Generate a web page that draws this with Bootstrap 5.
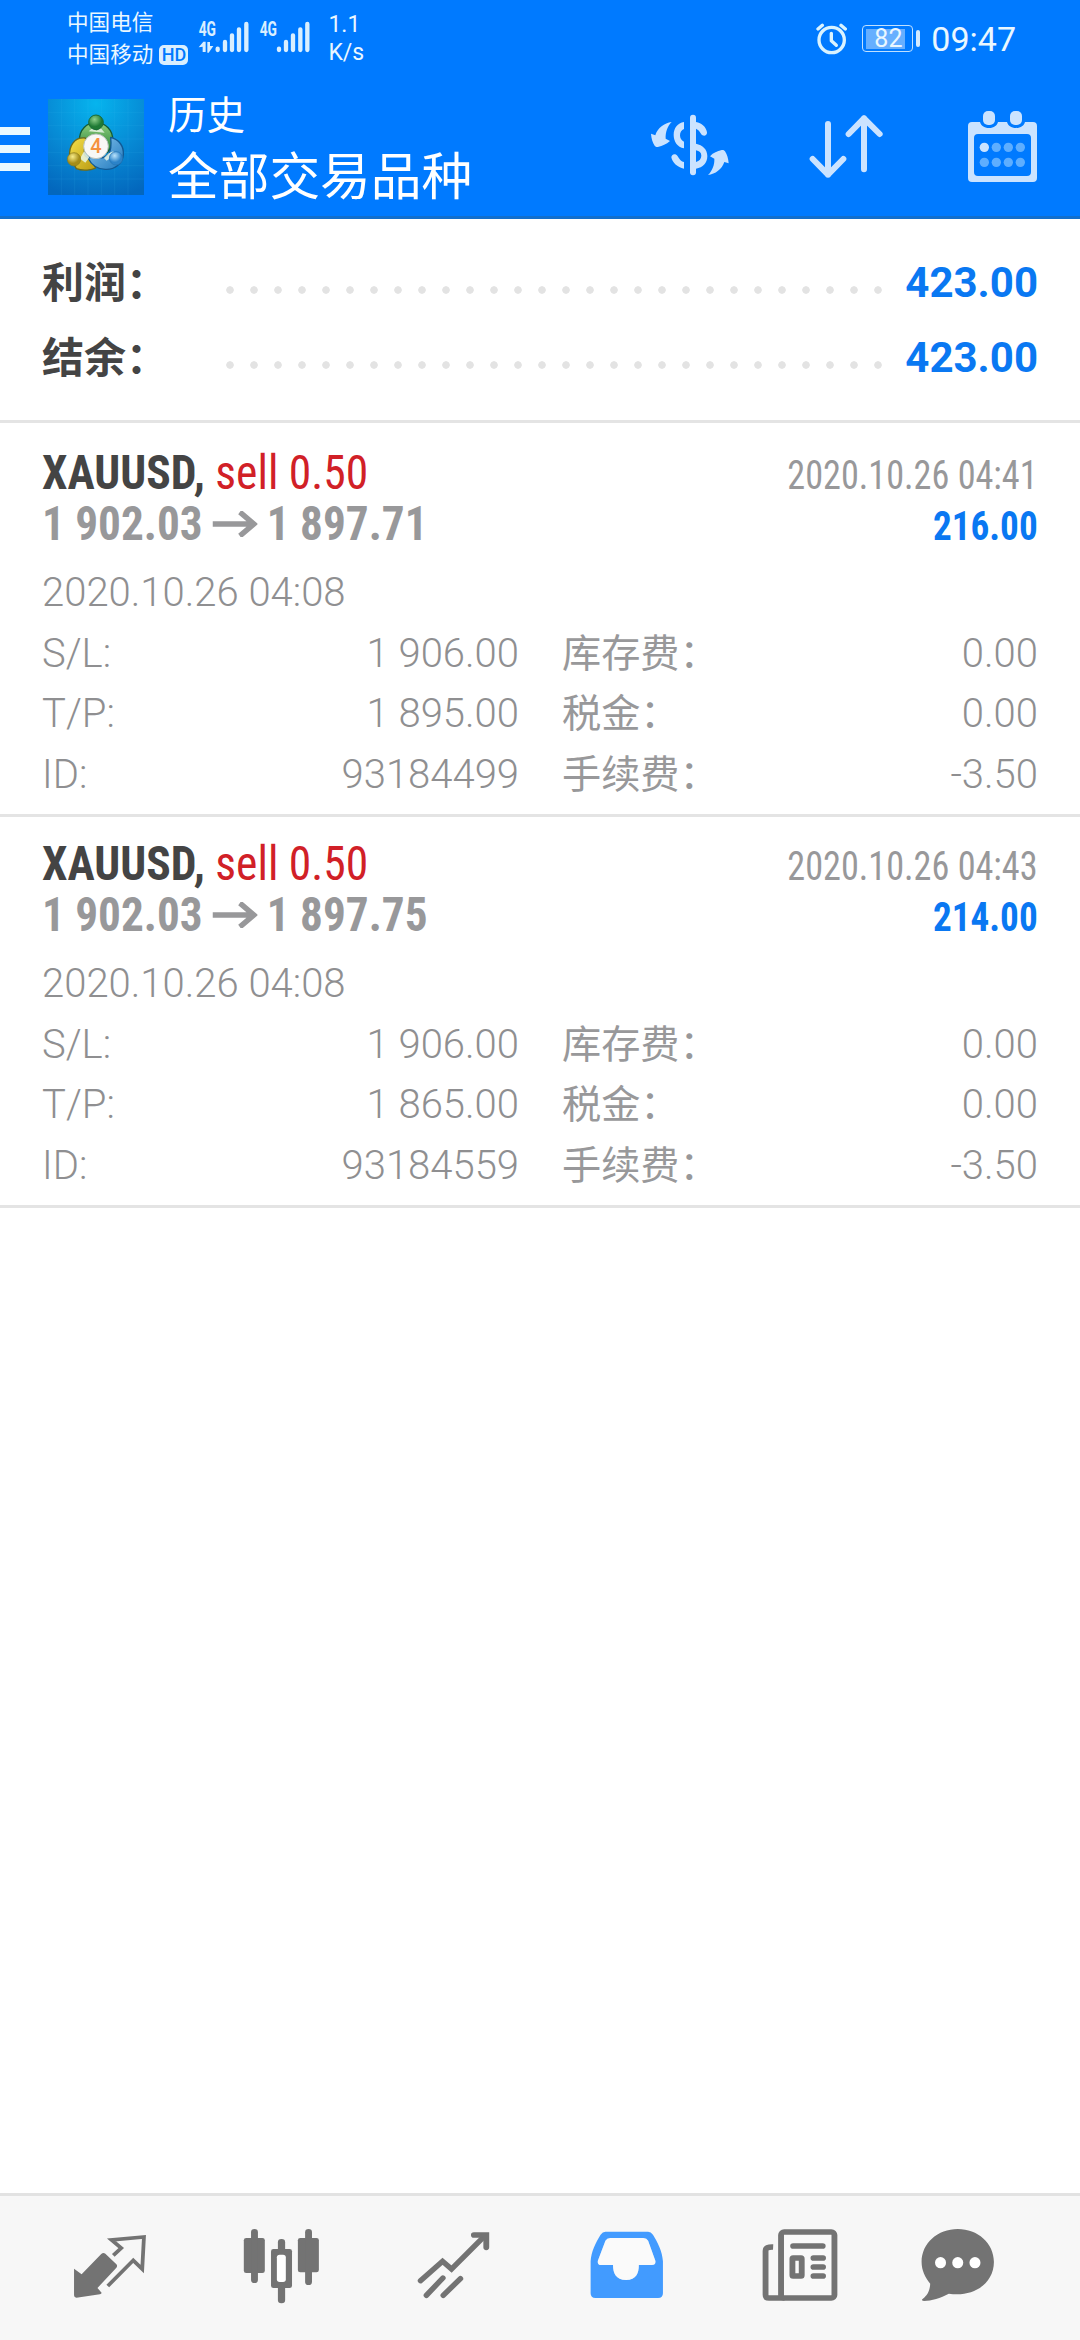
<!DOCTYPE html>
<html lang="zh-CN">
<head>
<meta charset="utf-8">
<meta name="viewport" content="width=device-width, initial-scale=1">
<title>历史</title>
<link rel="stylesheet" href="https://cdn.jsdelivr.net/npm/bootstrap@5.3.0/dist/css/bootstrap.min.css">
<style>
body{width:1080px;height:2340px;overflow:hidden;background:#fff;font-family:Roboto,"Noto Sans CJK SC",sans-serif;color:#98989a}
svg{display:block;flex:none}
.appbar{height:219px;background:#007aff;border-bottom:3px solid #126fcd;color:#eaf7ff}
.status{height:74px;padding:0 64px 0 67px}
.carriers{font-size:21.6px;line-height:32px;padding-top:7px}
.hdtag{width:29px;height:20px;border-radius:5px;background:#d9efff;color:#007aff;font-size:18px;line-height:20px;font-weight:500;margin-left:6px}
.speed{font-size:23px;line-height:27.5px;padding-top:11px;margin-left:18px}
.sysinfo{padding-top:3px}
.batt{width:51px;height:27px;border:1.5px solid #bfe0ff;border-radius:4px;padding:2.5px 3px;margin-left:14px}
.batt-fill{width:39px;height:20px;background:#66afff;font-size:25px;line-height:20px;padding-left:8px}
.batt-nub{width:4px;height:17px;border-radius:2px;background:#d3eaff;margin-left:3px}
.clock{font-size:34px;line-height:40px;margin-left:11px}
.toolbar{height:144px}
.burger{width:30px;margin-right:18px;gap:10px;padding-top:6px}
.burger span{height:8px;background:#eaf9ff}
.logo{margin-top:2px}
.sort-icon{margin-left:76px}
.cal-icon{margin-left:80px}
.t1{font-size:38.5px;line-height:44px}
.t2{font-size:50.7px;line-height:60px;white-space:nowrap;margin-top:10px}
.titles{margin-left:24px;padding-top:9px;color:#fff;width:480px}
.summary{padding:26px 42px 25px;border-bottom:3px solid #e4e4e4}
.sumrow{height:75px;line-height:75px;font-size:42px;font-weight:700}
.sumrow .k{color:#444;width:184px;padding-top:1px}
.sumrow .v{color:#0a78f2}
.leader{width:664px;height:75px;background:radial-gradient(circle at 4px 45px,#e3e3e3 3.4px,transparent 4.1px) 0 0/24px 75px repeat-x}
.deals{padding-top:3px}
.deal{height:391px;padding:21px 42px 0;border-bottom:3px solid #e4e4e4}
.headrow{height:51px}
.cond{display:inline-block;font-family:"Roboto Condensed",Roboto,sans-serif;font-stretch:condensed;white-space:nowrap;transform-origin:left}
.cond.end{transform-origin:right}
.big{font-size:48px;line-height:51px;transform:scaleX(.948)}
.prices{transform:scaleX(.942)}
.prices svg{margin:-6px -1px 0 -1px}
.when{transform:scaleX(.905)}
.gain{transform:scaleX(.93)}
.sm40{font-size:40px;line-height:51px}
.sym{color:#444}.side{color:#d12027}.gain{color:#0a78f2}
.details{margin-top:14px;font-size:40px;line-height:60.7px;font-weight:350;color:#8f8f91}
.details .cn{font-size:39.2px;font-weight:400;color:#98989a}
.colA{width:477px}.colB{width:476px}
.tabs-bar{height:147px;background:#f7f7f7;border-top:3px solid #e2e2e2;margin-top:auto}
</style>
</head>
<body class="d-flex flex-column">
<header class="appbar flex-shrink-0">
  <div class="status d-flex">
    <div class="carriers">
      <div>中国电信</div>
      <div class="d-flex align-items-center">中国移动<span class="hdtag text-center">HD</span></div>
    </div>
    <svg class="ms-2" width="114" height="74" viewBox="588 0 342 222" fill="#d9efff">
      <g font-family="Roboto" font-weight="700" font-size="58"><text x="596" y="107" textLength="52" lengthAdjust="spacingAndGlyphs">4G</text><text x="779" y="107" textLength="52" lengthAdjust="spacingAndGlyphs">4G</text></g>
      <path d="M596 142l14-17h7v31h-9v-16zM622 126h8v12h10l-14 20h-4z"/>
      <g stroke="#d9efff" stroke-width="13" stroke-linecap="round"><path d="M653 146v4M675 126v24M696 106v44M717 88v62M739 72v78M837 146v4M858 126v24M879 106v44M901 88v62M922 72v78"/></g>
    </svg>
    <div class="speed"><div>1.1</div><div>K/s</div></div>
    <div class="sysinfo ms-auto d-flex align-items-center">
      <svg width="32" height="74" viewBox="115 0 96 222" fill="none" stroke="#d9f3ff" stroke-linecap="round" stroke-linejoin="round"><circle cx="162" cy="114" r="38" stroke-width="10"/><path d="M161 94v22l15 14" stroke-width="10"/><path d="M121 81l13-11M203 81l-13-11" stroke-width="10"/></svg>
      <div class="batt"><div class="batt-fill">82</div></div><div class="batt-nub"></div>
      <div class="clock">09:47</div>
    </div>
  </div>
  <div class="toolbar d-flex align-items-center">
    <div class="burger d-flex flex-column"><span></span><span></span><span></span></div>
    <svg class="logo" width="96" height="96" viewBox="24 27 288 288">
      <defs>
        <radialGradient id="sky" cx=".5" cy=".05" r="1"><stop offset="0" stop-color="#06b4ee"/><stop offset=".55" stop-color="#0789d4"/><stop offset="1" stop-color="#0367bd"/></radialGradient>
        <linearGradient id="gr" x2="0" y2="1"><stop offset="0" stop-color="#8fcf7c"/><stop offset="1" stop-color="#237f38"/></linearGradient>
        <linearGradient id="ye" x2="1" y2="1"><stop offset="0" stop-color="#f5e04a"/><stop offset="1" stop-color="#b99a12"/></linearGradient>
        <linearGradient id="bl" x2="1" y2="1"><stop offset="0" stop-color="#8cc8f0"/><stop offset="1" stop-color="#1f78bd"/></linearGradient>
        <radialGradient id="bg1" cx=".4" cy=".3"><stop offset="0" stop-color="#8ed08a"/><stop offset="1" stop-color="#1f7a35"/></radialGradient>
        <radialGradient id="by1" cx=".4" cy=".3"><stop offset="0" stop-color="#f7ec8a"/><stop offset="1" stop-color="#a58d17"/></radialGradient>
        <radialGradient id="bb1" cx=".4" cy=".3"><stop offset="0" stop-color="#b9e2fb"/><stop offset="1" stop-color="#2b83c9"/></radialGradient>
      </defs>
      <rect x="24" y="27" width="288" height="288" fill="url(#sky)"/>
      <path d="M24 67h288M24 107h288M24 147h288M24 187h288M24 227h288M24 267h288M64 27v288M104 27v288M144 27v288M184 27v288M224 27v288M264 27v288" stroke="#4cc4f5" stroke-opacity=".16" stroke-width="2"/>
      <g stroke-linejoin="round">
        <path d="M118 152c0-34 22-54 50-54s52 22 50 54c-1 16-8 28-18 36l-14-10c6-28-6-38-18-38-16 0-26 6-32 14z" fill="url(#gr)" stroke="#165c34" stroke-width="4"/>
        <path d="M136 144c-34-4-50 26-47 56l20 36c20 8 48 4 58-2l-12-30c-16 2-24-6-22-22 0-10 4-16 12-24z" fill="url(#ye)" stroke="#6b6a1c" stroke-width="4"/>
        <path d="M212 142c26 6 40 28 38 52-2 28-28 46-54 44-20 0-40-10-52-34l24-6c14 10 30 4 38-6 8-12 8-30 6-50z" fill="url(#bl)" stroke="#115994" stroke-width="4"/>
      </g>
      <path d="M146 124l12-10 12 8 12-8 12 14zM120 206l12-22 16 18-12 16zM206 190l14-6 4 10-24 18-8-8z" fill="#e9f6e6" fill-opacity=".85"/>
      <circle cx="168" cy="97" r="22" fill="url(#bg1)" stroke="#1a6b38" stroke-width="3"/>
      <circle cx="102" cy="208" r="20" fill="url(#by1)" stroke="#8a7a1c" stroke-width="2"/>
      <circle cx="228" cy="205" r="20" fill="url(#bb1)" stroke="#2373b3" stroke-width="2"/>
      <circle cx="168" cy="169" r="37" fill="#f8f8f6" stroke="#b9c2bd" stroke-width="3"/>
      <text x="168" y="190" text-anchor="middle" font-family="Roboto" font-weight="500" font-size="60" fill="#f5923e">4</text>
    </svg>
    <div class="titles"><div class="t1">历史</div><div class="t2">全部交易品种</div></div>
    <svg width="84" height="66" viewBox="84 99 252 198" fill="#cbe3ff">
      <path d="M155 126c-22 3-42 17-49 40l-13-5c1 15 5 27 11 36 3 4 8 5 12 3 10-2 23-7 34-17l-13-7c-1-20 6-38 18-50z"/>
      <path d="M264 285c22-3 42-17 49-39l13 4c-1-14-5-27-11-36-3-4-8-5-12-3-10 2-23 7-33 18l13 7c1 18-6 36-19 49z"/>
      <path d="M192 126c-19 3-31 18-31 39 0 19 11 37 31 40v-20c-8-4-12-11-12-19 0-9 4-16 12-19zM192 266v-20c-8-2-13-7-20-19-8-9-18-3-18 5 3 16 18 30 38 34z"/>
      <path d="M219 113v164" stroke="#cbe3ff" stroke-width="18" stroke-linecap="round"/>
      <path d="M228 126c17 3 30 14 33 31 1 10-11 14-17 6-5-9-9-14-16-17zM228 191c20 4 34 17 34 37 0 20-13 35-34 38v-20c10-3 16-10 16-19s-6-14-16-16z"/>
    </svg>
    <svg class="sort-icon" width="78" height="67" viewBox="564 99 234 201" fill="none" stroke="#cbe3ff" stroke-width="18" stroke-linecap="round" stroke-linejoin="round"><path d="M624 132v152M578 237l46 47 46-47M732 268V115M686 162l46-47 47 47"/></svg>
    <svg class="cal-icon" width="73" height="75" viewBox="1038 84 219 225" fill="#cbe3ff">
      <path fill-rule="evenodd" d="M1056 123h24c3 11 12 18 27 18s24-7 27-18h27c3 11 12 18 27 18s24-7 27-18h24c8 0 12 4 12 12v156c0 8-4 12-12 12h-183c-8 0-12-4-12-12V135c0-8 4-12 12-12zM1074 159c-8 0-12 4-12 12v102c0 8 4 12 12 12h147c8 0 12-4 12-12V171c0-8-4-12-12-12z"/>
      <rect x="1089" y="90" width="36" height="42" rx="15"/><rect x="1170" y="90" width="36" height="42" rx="15"/>
      <circle cx="1093" cy="199" r="14"/>
      <g fill="#5eaeff"><circle cx="1129" cy="199" r="14"/><circle cx="1165" cy="199" r="14"/><circle cx="1201" cy="199" r="14"/><circle cx="1093" cy="244" r="14"/><circle cx="1129" cy="244" r="14"/><circle cx="1165" cy="244" r="14"/><circle cx="1201" cy="244" r="14"/></g>
    </svg>
  </div>
</header>

<main>
  <section class="summary">
    <div class="sumrow d-flex"><div class="k">利润：</div><div class="leader"></div><div class="v ms-auto">423.00</div></div>
    <div class="sumrow d-flex"><div class="k">结余：</div><div class="leader"></div><div class="v ms-auto">423.00</div></div>
  </section>
  <section class="deals">
    <article class="deal">
      <div class="headrow d-flex justify-content-between align-items-baseline"><div class="cond big"><span class="sym fw-bold">XAUUSD,</span> <span class="side">sell 0.50</span></div><div class="cond end sm40 when">2020.10.26 04:41</div></div>
      <div class="headrow d-flex justify-content-between align-items-baseline fw-bold"><div class="cond big prices">1 902.03 <svg class="d-inline" width="48" height="26" viewBox="0 0 48 26"><path d="M0 13h44M29 1l15 12-15 12" fill="none" stroke="#98989a" stroke-width="5.5"/></svg> 1 897.71</div><div class="cond end sm40 gain">216.00</div></div>
      <div class="details">
        <div>2020.10.26 04:08</div>
        <div class="d-flex"><div class="colA d-flex justify-content-between"><span>S/L:</span><span>1 906.00</span></div><div class="colB d-flex justify-content-between ms-auto"><span class="cn">库存费：</span><span>0.00</span></div></div>
        <div class="d-flex"><div class="colA d-flex justify-content-between"><span>T/P:</span><span>1 895.00</span></div><div class="colB d-flex justify-content-between ms-auto"><span class="cn">税金：</span><span>0.00</span></div></div>
        <div class="d-flex"><div class="colA d-flex justify-content-between"><span>ID:</span><span>93184499</span></div><div class="colB d-flex justify-content-between ms-auto"><span class="cn">手续费：</span><span>-3.50</span></div></div>
      </div>
    </article>
    <article class="deal">
      <div class="headrow d-flex justify-content-between align-items-baseline"><div class="cond big"><span class="sym fw-bold">XAUUSD,</span> <span class="side">sell 0.50</span></div><div class="cond end sm40 when">2020.10.26 04:43</div></div>
      <div class="headrow d-flex justify-content-between align-items-baseline fw-bold"><div class="cond big prices">1 902.03 <svg class="d-inline" width="48" height="26" viewBox="0 0 48 26"><path d="M0 13h44M29 1l15 12-15 12" fill="none" stroke="#98989a" stroke-width="5.5"/></svg> 1 897.75</div><div class="cond end sm40 gain">214.00</div></div>
      <div class="details">
        <div>2020.10.26 04:08</div>
        <div class="d-flex"><div class="colA d-flex justify-content-between"><span>S/L:</span><span>1 906.00</span></div><div class="colB d-flex justify-content-between ms-auto"><span class="cn">库存费：</span><span>0.00</span></div></div>
        <div class="d-flex"><div class="colA d-flex justify-content-between"><span>T/P:</span><span>1 865.00</span></div><div class="colB d-flex justify-content-between ms-auto"><span class="cn">税金：</span><span>0.00</span></div></div>
        <div class="d-flex"><div class="colA d-flex justify-content-between"><span>ID:</span><span>93184559</span></div><div class="colB d-flex justify-content-between ms-auto"><span class="cn">手续费：</span><span>-3.50</span></div></div>
      </div>
    </article>
  </section>
</main>

<nav class="tabs-bar d-flex flex-shrink-0">
  <svg width="180" height="144" viewBox="0 48 522.7 432" preserveAspectRatio="none" fill="#737373">
    <path d="M215 266l22 17 57-61q6-6 12-1l32 32q4 5 0 10l-55 61 12 14q0 4-5 5l-68 10q-7 0-7-7z"/>
    <path d="M329 226l23-22-28-24 94-9-5 96-26-26-74 77" fill="none" stroke="#737373" stroke-width="11"/>
  </svg>
  <svg width="180" height="144" viewBox="522.7 48 522.7 432" preserveAspectRatio="none" fill="#737373">
    <rect x="708" y="174" width="61" height="105" rx="7"/><rect x="729" y="147" width="20" height="162" rx="10"/>
    <rect x="865" y="174" width="61" height="103" rx="7"/><rect x="886" y="147" width="20" height="168" rx="10"/>
    <rect x="807" y="177" width="21" height="193" rx="10"/><rect x="787" y="207" width="61" height="117" rx="7"/><rect x="804" y="224" width="26" height="82" rx="8" fill="#fff"/>
  </svg>
  <svg width="180" height="144" viewBox="1045.3 48 522.7 432" preserveAspectRatio="none" fill="none" stroke="#737373" stroke-width="16" stroke-linecap="round" stroke-linejoin="miter">
    <path d="M1221 302l64-58 26 23 95-98"/><path d="M1376 165h36v37" stroke-width="17"/><path d="M1238 346l48-52M1287 346l50-50"/>
  </svg>
  <svg width="180" height="144" viewBox="0 48 522.7 432" preserveAspectRatio="none">
    <path fill="#429bff" fill-rule="evenodd" d="M190 155h124q8 0 14 9c14 23 27 50 29 80v96q0 14-14 14H161q-14 0-14-14v-96c2-30 15-57 29-80q6-9 14-9zM204 174q-10 0-14 8l-22 60q-2 13 9 13h35c0 24 8 45 38 45s37-21 37-45h38q12 0 10-13l-21-60q-4-8-14-8z"/>
    <path fill="#fff" fill-opacity=".4" d="M204 174q-10 0-14 8l-22 60q-2 13 9 13h35c0 24 8 45 38 45s37-21 37-45h38q12 0 10-13l-21-60q-4-8-14-8z"/>
  </svg>
  <svg width="180" height="144" viewBox="522.7 48 522.7 432" preserveAspectRatio="none" fill="none" stroke="#737373" stroke-width="17">
    <path d="M677 201q-22-1-22 12v131q0 10 10 10h45"/>
    <rect x="700" y="156" width="155" height="198" rx="9" fill="#f9f9f9"/>
    <path d="M735 198h86M794 234h28M794 261h28M794 288h28" stroke-linecap="round"/><rect x="733" y="234" width="27" height="54" rx="2"/>
  </svg>
  <svg width="180" height="144" viewBox="1045.3 48 522.7 432" preserveAspectRatio="none" fill="#737373">
    <path d="M1213 147c58 0 105 42 105 99 0 66-62 107-131 95-24 13-50 21-72 22-6 0-8-4-4-6 14-12 21-24 22-46-15-19-25-40-25-65 0-57 47-99 105-99z"/>
    <g fill="#fff"><ellipse cx="1163" cy="248" rx="16" ry="17"/><ellipse cx="1213" cy="248" rx="16" ry="17"/><ellipse cx="1263" cy="248" rx="16" ry="17"/></g>
  </svg>
</nav>
<script src="https://cdn.jsdelivr.net/npm/bootstrap@5.3.0/dist/js/bootstrap.bundle.min.js"></script>
</body>
</html>
